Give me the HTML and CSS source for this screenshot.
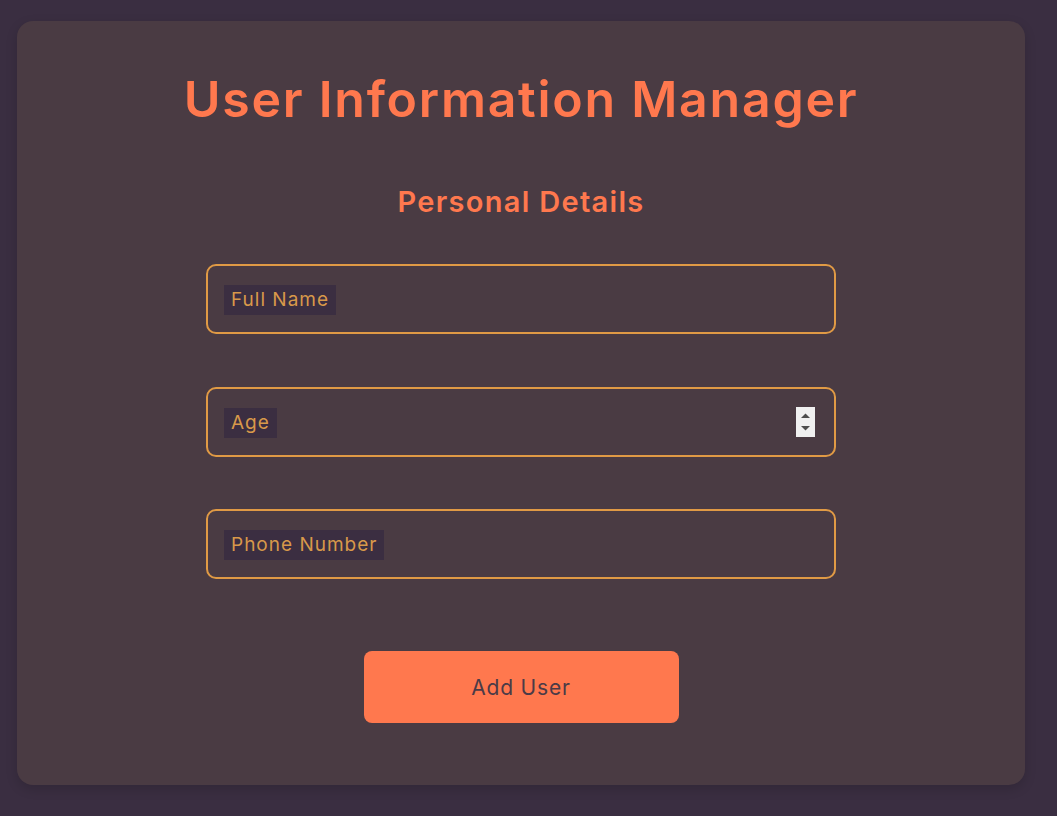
FILE: index.html
```html
<!DOCTYPE html>
<html lang="en">
<head>
<meta charset="utf-8">
<title>User Information Manager</title>
<link rel="stylesheet" href="styles.css">
</head>
<body>
<main class="card">
  <h1 class="title">User Information Manager</h1>
  <h2 class="subtitle">Personal Details</h2>
  <form class="form">
    <div class="field">
      <input class="input" type="text" id="name">
      <label class="label" for="name">Full Name</label>
    </div>
    <div class="field">
      <input class="input input-number" type="number" id="age">
      <label class="label" for="age">Age</label>
      <span class="spin" aria-hidden="true">
        <svg width="19" height="30" viewBox="0 0 19 30">
          <path d="M5 11 L9.5 6.5 L14 11 Z" fill="#4d4d4d"/>
          <path d="M5 19 L9.5 23.5 L14 19 Z" fill="#4d4d4d"/>
        </svg>
      </span>
    </div>
    <div class="field">
      <input class="input" type="tel" id="phone">
      <label class="label" for="phone">Phone Number</label>
    </div>
    <button class="btn" type="button">Add User</button>
  </form>
</main>
</body>
</html>
```
FILE: styles.css
```css
* { box-sizing: border-box; }
html, body { margin: 0; }
body {
  background: #3a2e41;
  font-family: "Inter", "Open Sans", sans-serif;
  padding: 21px 32px 31px 17px;
  min-height: 816px;
}
.card {
  background: #4a3b43;
  border-radius: 16px;
  box-shadow: 0 4px 12px rgba(0,0,0,0.15);
  padding: 48px 0 62px;
  display: flex;
  flex-direction: column;
  align-items: center;
  min-height: 764px;
}
.title {
  margin: 0;
  color: #ff784e;
  font-size: 50px;
  font-weight: 600;
  line-height: 60px;
  letter-spacing: 1.75px;
  text-align: center;
}
.subtitle {
  margin: 55px 0 0;
  color: #ff784e;
  font-size: 29px;
  font-weight: 600;
  line-height: 35px;
  letter-spacing: 1.3px;
  text-align: center;
}
.form {
  width: 630px;
  margin-top: 45px;
  display: flex;
  flex-direction: column;
  gap: 52.5px;
  align-items: center;
}
.field {
  position: relative;
  width: 100%;
}
.input {
  display: block;
  width: 100%;
  height: 70px;
  padding: 18px 18px;
  border: 2px solid #e09a45;
  border-radius: 10px;
  background: transparent;
  color: #d8994a;
  font: 19px/30px "Inter", "Open Sans", sans-serif;
  outline: none;
  -moz-appearance: textfield;
}
.input-number::-webkit-inner-spin-button,
.input-number::-webkit-outer-spin-button {
  -webkit-appearance: none;
  margin: 0;
}
.spin {
  position: absolute;
  right: 21px;
  top: 20px;
  width: 19px;
  height: 30px;
  background: #f0f0f0;
  display: block;
  pointer-events: none;
}
.spin svg { display: block; }
.label {
  position: absolute;
  left: 18px;
  top: 21px;
  height: 30px;
  line-height: 30px;
  padding: 0 7px;
  background: #3b2e41;
  color: #d8994a;
  font-size: 19px;
  letter-spacing: 1px;
  pointer-events: none;
}
.btn {
  width: 315px;
  height: 72px;
  margin-top: 19.5px;
  border: none;
  border-radius: 8px;
  background: #ff784e;
  color: #4a3b47;
  font: 21px "Inter", "Open Sans", sans-serif;
  letter-spacing: 0.8px;
  cursor: pointer;
}
```
